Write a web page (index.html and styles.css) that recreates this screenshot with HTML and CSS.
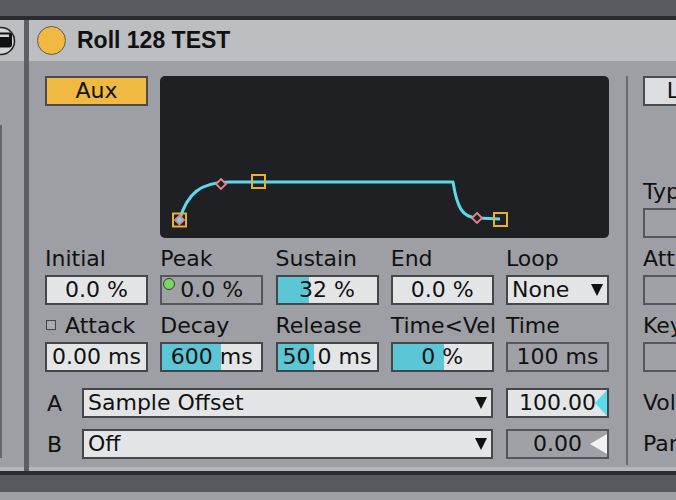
FILE: index.html
```html
<!DOCTYPE html>
<html lang="en">
<head>
    <meta charset="UTF-8">
    <title>Roll 128 TEST</title>
    <link rel="stylesheet" href="styles.css">
</head>
<body>
    <div class="screen">
        <div class="topbar"></div>

        <div class="rack">
            <div class="prev-device">
                <div class="prev-header">
                    <svg class="prev-icon" width="24" height="41" viewBox="0 0 24 41">
                        <circle cx="1" cy="21" r="13.5" fill="#d4d5d8" stroke="#222" stroke-width="1.6"/>
                        <rect x="-9" y="12.5" width="21" height="15" rx="3" fill="#111"/>
                        <rect x="-5" y="14.5" width="14" height="2.5" fill="#d4d5d8"/>
                    </svg>
                </div>
                <div class="prev-body"><div class="prev-line"></div></div>
                <div class="device-foot"></div>
            </div>

            <div class="rack-sep"></div>

            <div class="device">
                <div class="device-header">
                    <span class="power"></span>
                    <span class="device-title">Roll 128 TEST</span>
                </div>

                <div class="device-body">
                    <div class="main-panel">
                        <div class="param-grid">
                            <div class="aux-cell">
                                <div class="btn aux">Aux</div>
                            </div>
                            <div class="display">
                                <svg width="448" height="162" viewBox="0 0 448 162">
                                    <path d="M19.5,144 C27,118 40,106 70,106 L293,106 C297,131 302,142 318,142 L340,143"
                                          fill="none" stroke="#5cd9ec" stroke-width="3" stroke-linejoin="round"/>
                                    <rect x="13" y="137.5" width="13" height="13" fill="none" stroke="#e6b134" stroke-width="2"/>
                                    <rect x="92" y="99" width="13" height="13" fill="none" stroke="#e6b134" stroke-width="2"/>
                                    <rect x="334" y="137" width="13" height="13" fill="none" stroke="#e6b134" stroke-width="2"/>
                                    <path d="M19.5,139.5 L24,144 L19.5,148.5 L15,144 Z" fill="#5cd9ec" stroke="#e2838c" stroke-width="1.8"/>
                                    <path d="M61,103 L66,108 L61,113 L56,108 Z" fill="#1f2023" stroke="#e2838c" stroke-width="1.8"/>
                                    <path d="M317,137 L322,142 L317,147 L312,142 Z" fill="#1f2023" stroke="#e2838c" stroke-width="1.8"/>
                                </svg>
                            </div>

                            <div class="param">
                                <div class="param-label">Initial</div>
                                <div class="field">0.0 %</div>
                            </div>
                            <div class="param">
                                <div class="param-label">Peak</div>
                                <div class="field off"><span class="led"></span>0.0 %</div>
                            </div>
                            <div class="param">
                                <div class="param-label">Sustain</div>
                                <div class="field"><span class="fill" style="width: 32%"></span><span class="field-text">32 %</span></div>
                            </div>
                            <div class="param">
                                <div class="param-label">End</div>
                                <div class="field">0.0 %</div>
                            </div>
                            <div class="param">
                                <div class="param-label">Loop</div>
                                <div class="field menu">None<span class="arrow"></span></div>
                            </div>

                            <div class="param">
                                <div class="param-label"><span class="check"></span>Attack</div>
                                <div class="field">0.00 ms</div>
                            </div>
                            <div class="param">
                                <div class="param-label">Decay</div>
                                <div class="field"><span class="fill" style="width: 59%"></span><span class="field-text">600 ms</span></div>
                            </div>
                            <div class="param">
                                <div class="param-label">Release</div>
                                <div class="field"><span class="fill" style="width: 37%"></span><span class="field-text">50.0 ms</span></div>
                            </div>
                            <div class="param">
                                <div class="param-label">Time&lt;Vel</div>
                                <div class="field"><span class="fill" style="width: 52%"></span><span class="field-text">0 %</span></div>
                            </div>
                            <div class="param">
                                <div class="param-label">Time</div>
                                <div class="field off">100 ms</div>
                            </div>
                        </div>

                        <div class="macro-row">
                            <span class="macro-label">A</span>
                            <div class="field menu wide">Sample Offset<span class="arrow"></span></div>
                            <div class="field amount">100.00
                                <svg class="amount-mark" width="12" height="26" viewBox="0 0 12 26"><path d="M12,0 L12,26 L0,13 Z" fill="#5cd9ec"/></svg>
                            </div>
                        </div>
                        <div class="macro-row">
                            <span class="macro-label">B</span>
                            <div class="field menu wide">Off<span class="arrow"></span></div>
                            <div class="field amount off">0.00
                                <svg class="amount-mark small" width="17" height="20" viewBox="0 0 17 20"><path d="M17,0 L17,20 L0,10 Z" fill="#f2f2f3"/></svg>
                            </div>
                        </div>
                    </div>

                    <div class="panel-divider"></div>

                    <div class="side-panel">
                        <div class="btn light">L</div>
                        <div class="side-label first">Type</div>
                        <div class="field off side-field"></div>
                        <div class="side-label">Attack</div>
                        <div class="field off side-field"></div>
                        <div class="side-label">Key</div>
                        <div class="field off side-field"></div>
                        <div class="side-row first">Volume</div>
                        <div class="side-row">Pan</div>
                    </div>
                </div>
                <div class="device-foot"></div>
            </div>
        </div>

        <div class="bottombar"></div>
    </div>
</body>
</html>
```

FILE: styles.css
```css
body {
    margin: 0;
    font-family: "DejaVu Sans", sans-serif;
    font-size: 22px;
    color: #111;
    background-color: #9d9fa5;
}
.screen {
    width: 676px;
    height: 500px;
    overflow: hidden;
}
.topbar {
    height: 16px;
    background-color: #5a5b60;
    border-bottom: 4px solid #2a2b2e;
}
.rack {
    display: flex;
    height: 451px;
}
.prev-device {
    width: 24px;
    display: flex;
    flex-direction: column;
    overflow: hidden;
}
.prev-header {
    height: 41px;
    background-color: #bdbec2;
}
.prev-icon {
    display: block;
}
.prev-body {
    flex: 1;
    display: flex;
    padding: 64px 0 9px 0;
    background-color: #9d9fa5;
}
.prev-line {
    width: 2px;
    background-color: #65666b;
}
.rack-sep {
    width: 5px;
    background-color: #5e5f64;
}
.device {
    flex: 1;
    display: flex;
    flex-direction: column;
    min-width: 0;
}
.device-foot {
    height: 4px;
    background-color: #b5b6ba;
}
.device-header {
    height: 41px;
    display: flex;
    align-items: center;
    background-color: #bdbec2;
}
.power {
    width: 27px;
    height: 27px;
    margin-left: 8px;
    border-radius: 50%;
    background-color: #efb942;
    border: 1.5px solid #5b5b5c;
}
.device-title {
    margin-left: 11px;
    font-family: "Liberation Sans", sans-serif;
    font-weight: bold;
    font-size: 23px;
    color: #111;
}
.device-body {
    flex: 1;
    display: flex;
    padding: 15px 0 2px 16px;
    background-color: #9d9fa5;
    overflow: hidden;
}
.main-panel {
    width: 564px;
    flex-shrink: 0;
}
.param-grid {
    display: grid;
    grid-template-columns: repeat(5, 103px);
    grid-template-rows: 162px 58px 58px;
    column-gap: 12.25px;
    row-gap: 9px;
}
.display {
    grid-column: 2 / 6;
    background-color: #1f2023;
    border-radius: 5px;
}
.display svg {
    display: block;
}
.btn {
    height: 30px;
    box-sizing: border-box;
    border: 2px solid #4a4b4f;
    line-height: 26px;
    text-align: center;
}
.aux {
    background-color: #efb942;
}
.btn.light {
    width: 60px;
    background-color: #dcdde0;
}
.param-label {
    height: 24px;
    line-height: 24px;
    margin-bottom: 4px;
    white-space: nowrap;
}
.check {
    display: inline-block;
    width: 8px;
    height: 8px;
    margin: 0 9px 0 1px;
    border: 1.5px solid #45464a;
    background-color: #a9abb0;
    vertical-align: 3px;
}
.field {
    position: relative;
    height: 30px;
    box-sizing: border-box;
    border: 2px solid #45464a;
    background-color: #e4e5e7;
    line-height: 26px;
    text-align: center;
    white-space: nowrap;
    overflow: hidden;
}
.field.off {
    background-color: #9fa1a7;
    border-color: #55565b;
}
.fill {
    position: absolute;
    left: 0;
    top: 0;
    bottom: 0;
    background-color: #5bc6d6;
}
.field-text {
    position: relative;
}
.led {
    position: absolute;
    left: 1px;
    top: 1px;
    width: 10px;
    height: 10px;
    border-radius: 50%;
    background-color: #74d962;
    border: 1px solid #3c3d40;
}
.menu {
    display: flex;
    align-items: center;
    justify-content: space-between;
    padding: 0 4px 0 4px;
    text-align: left;
}
.arrow {
    width: 0;
    height: 0;
    border-left: 6.5px solid transparent;
    border-right: 6.5px solid transparent;
    border-top: 12px solid #111;
}
.macro-row {
    display: flex;
    align-items: center;
    height: 30px;
    margin-top: 16px;
}
.macro-row + .macro-row {
    margin-top: 11px;
}
.macro-label {
    width: 35px;
    padding-left: 2px;
}
.wide {
    flex: 1;
}
.amount {
    width: 103px;
    margin-left: 13px;
}
.amount-mark {
    position: absolute;
    right: 0;
    top: 0;
}
.amount-mark.small {
    top: 3px;
}
.panel-divider {
    width: 2px;
    margin-left: 17px;
    flex-shrink: 0;
    background-color: #6b6c71;
}
.side-panel {
    margin-left: 15px;
    flex-shrink: 0;
    width: 110px;
}
.side-label {
    height: 24px;
    line-height: 24px;
    margin: 9px 0 4px 0;
}
.side-label.first {
    margin-top: 74px;
}
.side-field {
    width: 103px;
}
.side-row {
    height: 30px;
    line-height: 30px;
    margin-top: 11px;
}
.side-row.first {
    margin-top: 16px;
}
.bottombar {
    height: 17px;
    background-color: #58595e;
    border-top: 4px solid #2a2b2e;
}
```
